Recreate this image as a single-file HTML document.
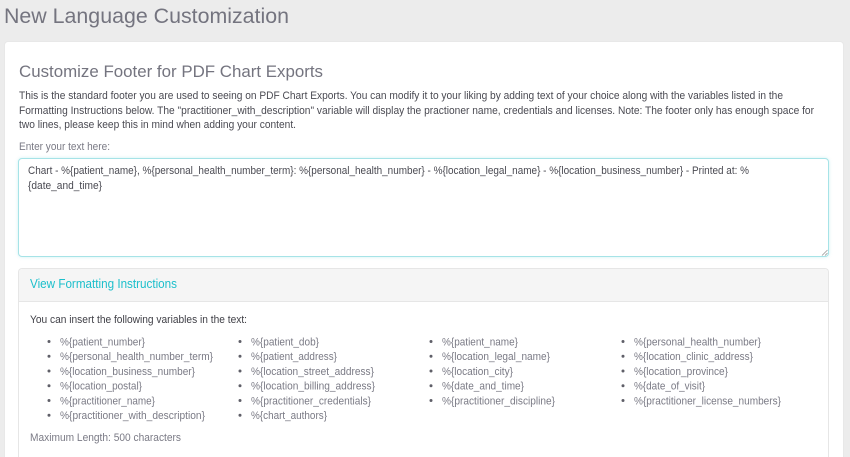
<!DOCTYPE html>
<html lang="en">
<head>
<meta charset="utf-8">
<title>New Language Customization</title>
<style>
html,body{margin:0;padding:0;width:850px;height:457px;overflow:hidden;background:#ececec;}
#wrap{position:relative;width:850px;height:457px;overflow:hidden;background:#ececec;}
svg{position:absolute;left:0;top:0;display:block;}
.box{position:absolute;box-sizing:border-box;}
#card{left:4px;top:41px;width:840px;height:416px;background:#fff;border:1px solid #e8e8e8;border-bottom:0;border-radius:4px 4px 0 0;}
#ta{left:18px;top:158px;width:811px;height:99px;background:#fff;border:1px solid #a6e3e7;border-radius:4px;box-shadow:0 0 3px rgba(120,215,222,.35);}
#panel{left:18px;top:268px;width:811px;height:189px;background:#fff;border:1px solid #e6e6e6;border-bottom:0;border-radius:4px 4px 0 0;overflow:hidden;}
#ph{position:absolute;left:0;top:0;right:0;height:32px;background:#f5f5f5;border-bottom:1px solid #e6e6e6;}
text{font-family:"Liberation Sans",sans-serif;}
#t{filter:blur(0.3px);}
.p{font-size:11px;fill:#4a4a52;}
.l{font-size:11px;fill:#7a7a85;}
</style>
</head>
<body>
<div id="wrap">
<div class="box" id="card"></div>
<div class="box" id="ta"></div>
<div class="box" id="panel"><div id="ph"></div></div>
<svg width="850" height="457" viewBox="0 0 850 457" xmlns="http://www.w3.org/2000/svg">
<g stroke="#9a9a9a" stroke-width="0.8">
<path d="M822 255.5L827.5 250M825 255.5L827.5 253"/>
</g>
<g id="t">
<text x="4" y="23" font-size="21" fill="#74747f" textLength="285" lengthAdjust="spacingAndGlyphs">New Language Customization</text>
<text x="19" y="77" font-size="17" fill="#74747f" textLength="304" lengthAdjust="spacingAndGlyphs">Customize Footer for PDF Chart Exports</text>

<text class="p" x="19" y="99" textLength="764" lengthAdjust="spacingAndGlyphs">This is the standard footer you are used to seeing on PDF Chart Exports. You can modify it to your liking by adding text of your choice along with the variables listed in the</text>
<text class="p" x="19" y="114" textLength="795" lengthAdjust="spacingAndGlyphs">Formatting Instructions below. The "practitioner_with_description" variable will display the practioner name, credentials and licenses. Note: The footer only has enough space for</text>
<text class="p" x="19" y="128" textLength="277" lengthAdjust="spacingAndGlyphs">two lines, please keep this in mind when adding your content.</text>
<text class="l" x="19" y="150" textLength="91" lengthAdjust="spacingAndGlyphs">Enter your text here:</text>

<text class="p" x="28" y="174" textLength="721" lengthAdjust="spacingAndGlyphs">Chart - %{patient_name}, %{personal_health_number_term}: %{personal_health_number} - %{location_legal_name} - %{location_business_number} - Printed at: %</text>
<text class="p" x="28" y="189" textLength="74" lengthAdjust="spacingAndGlyphs">{date_and_time}</text>

<text x="30" y="288" font-size="12.5" fill="#1cbfcb" textLength="147" lengthAdjust="spacingAndGlyphs">View Formatting Instructions</text>
<text x="30" y="323" font-size="11" fill="#3f3f46" textLength="217" lengthAdjust="spacingAndGlyphs">You can insert the following variables in the text:</text>

<g fill="#5f5f68">
<circle cx="49" cy="341.5" r="1.5"/><circle cx="49" cy="356.3" r="1.5"/><circle cx="49" cy="371" r="1.5"/><circle cx="49" cy="385.8" r="1.5"/><circle cx="49" cy="400.5" r="1.5"/><circle cx="49" cy="415.3" r="1.5"/>
<circle cx="240" cy="341.5" r="1.5"/><circle cx="240" cy="356.3" r="1.5"/><circle cx="240" cy="371" r="1.5"/><circle cx="240" cy="385.8" r="1.5"/><circle cx="240" cy="400.5" r="1.5"/><circle cx="240" cy="415.3" r="1.5"/>
<circle cx="431" cy="341.5" r="1.5"/><circle cx="431" cy="356.3" r="1.5"/><circle cx="431" cy="371" r="1.5"/><circle cx="431" cy="385.8" r="1.5"/><circle cx="431" cy="400.5" r="1.5"/>
<circle cx="623" cy="341.5" r="1.5"/><circle cx="623" cy="356.3" r="1.5"/><circle cx="623" cy="371" r="1.5"/><circle cx="623" cy="385.8" r="1.5"/><circle cx="623" cy="400.5" r="1.5"/>
</g>

<text class="l" x="60" y="345.3" textLength="85" lengthAdjust="spacingAndGlyphs">%{patient_number}</text>
<text class="l" x="60" y="360" textLength="153" lengthAdjust="spacingAndGlyphs">%{personal_health_number_term}</text>
<text class="l" x="60" y="374.8" textLength="135" lengthAdjust="spacingAndGlyphs">%{location_business_number}</text>
<text class="l" x="60" y="389.5" textLength="82" lengthAdjust="spacingAndGlyphs">%{location_postal}</text>
<text class="l" x="60" y="404.3" textLength="95" lengthAdjust="spacingAndGlyphs">%{practitioner_name}</text>
<text class="l" x="60" y="419" textLength="145" lengthAdjust="spacingAndGlyphs">%{practitioner_with_description}</text>

<text class="l" x="251" y="345.3" textLength="68" lengthAdjust="spacingAndGlyphs">%{patient_dob}</text>
<text class="l" x="251" y="360" textLength="86" lengthAdjust="spacingAndGlyphs">%{patient_address}</text>
<text class="l" x="251" y="374.8" textLength="123" lengthAdjust="spacingAndGlyphs">%{location_street_address}</text>
<text class="l" x="251" y="389.5" textLength="124" lengthAdjust="spacingAndGlyphs">%{location_billing_address}</text>
<text class="l" x="251" y="404.3" textLength="120" lengthAdjust="spacingAndGlyphs">%{practitioner_credentials}</text>
<text class="l" x="251" y="419" textLength="76" lengthAdjust="spacingAndGlyphs">%{chart_authors}</text>

<text class="l" x="442" y="345.3" textLength="76" lengthAdjust="spacingAndGlyphs">%{patient_name}</text>
<text class="l" x="442" y="360" textLength="108" lengthAdjust="spacingAndGlyphs">%{location_legal_name}</text>
<text class="l" x="442" y="374.8" textLength="71" lengthAdjust="spacingAndGlyphs">%{location_city}</text>
<text class="l" x="442" y="389.5" textLength="82" lengthAdjust="spacingAndGlyphs">%{date_and_time}</text>
<text class="l" x="442" y="404.3" textLength="113" lengthAdjust="spacingAndGlyphs">%{practitioner_discipline}</text>

<text class="l" x="634" y="345.3" textLength="127" lengthAdjust="spacingAndGlyphs">%{personal_health_number}</text>
<text class="l" x="634" y="360" textLength="119" lengthAdjust="spacingAndGlyphs">%{location_clinic_address}</text>
<text class="l" x="634" y="374.8" textLength="94" lengthAdjust="spacingAndGlyphs">%{location_province}</text>
<text class="l" x="634" y="389.5" textLength="71" lengthAdjust="spacingAndGlyphs">%{date_of_visit}</text>
<text class="l" x="634" y="404.3" textLength="147" lengthAdjust="spacingAndGlyphs">%{practitioner_license_numbers}</text>

<text class="l" x="30" y="441" textLength="151" lengthAdjust="spacingAndGlyphs">Maximum Length: 500 characters</text>
</g>
</svg>
</div>
</body>
</html>
